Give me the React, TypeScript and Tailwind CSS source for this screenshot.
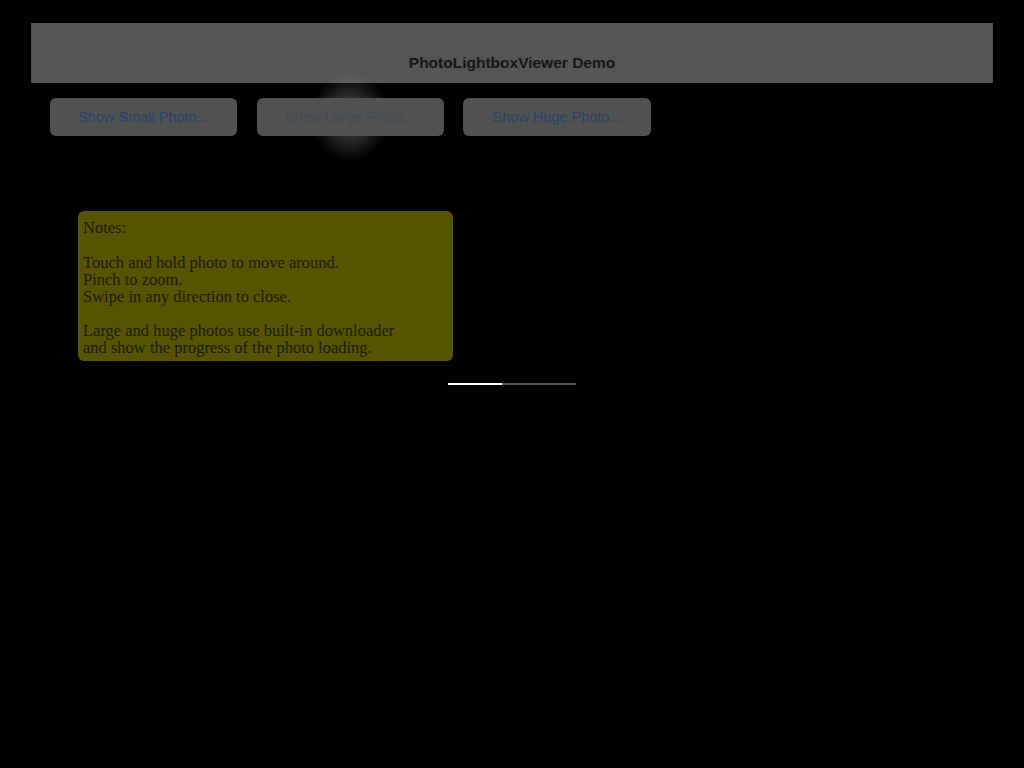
export default function App() {
  return (
    <div className="min-h-screen w-full bg-black pt-[23px]" style={{ fontFamily: '"Liberation Sans", Arial, sans-serif' }}>
      <div className="mx-[31px] flex h-[60px] items-end justify-center bg-[#555555] pb-[11px]">
        <h1 className="text-[15.5px] font-bold leading-[18px] text-[#161616]">PhotoLightboxViewer Demo</h1>
      </div>

      <div className="relative mt-[15px] flex gap-[20px] pl-[50px]">
        {/* touch highlight glow behind the middle button */}
        <div className="pointer-events-none absolute left-[310px] top-[-26px] h-[90px] w-[80px] rounded-full bg-[radial-gradient(ellipse,rgba(255,255,255,0.5)_0%,rgba(255,255,255,0.18)_30%,rgba(255,255,255,0)_70%)]" />
        <button className="relative h-[38px] w-[187px] rounded-[6px] bg-[#515151] pt-px text-[14.5px] text-[#27436a]">Show Small Photo...</button>
        <button className="relative h-[38px] w-[187px] rounded-[6px] bg-[#515151] pt-px text-[14.5px] text-[#434b57]">Show Large Photo...</button>
        <button className="relative ml-[-1px] h-[38px] w-[188px] rounded-[6px] bg-[#515151] pt-px text-[14.5px] text-[#27436a]">Show Huge Photo...</button>
      </div>

      <div
        className="ml-[78px] mt-[75px] h-[150px] w-[375px] rounded-[6px] bg-[#575300] px-[5px] pt-[8px] text-[16.5px] leading-[17px] text-[#1c1b00]"
        style={{ fontFamily: '"Liberation Serif", "Times New Roman", serif' }}
      >
        <p>Notes:</p>
        <p className="mt-[18px]">
          Touch and hold photo to move around.
          <br />
          Pinch to zoom.
          <br />
          Swipe in any direction to close.
        </p>
        <p className="mt-[17px]">
          Large and huge photos use built-in downloader
          <br />
          and show the progress of the photo loading.
        </p>
      </div>

      <div className="ml-[448px] mt-[22px] flex h-[2px] w-[128px] bg-[#5a5a5a]">
        <div className="h-full w-[54px] bg-white" />
      </div>
    </div>
  );
}
